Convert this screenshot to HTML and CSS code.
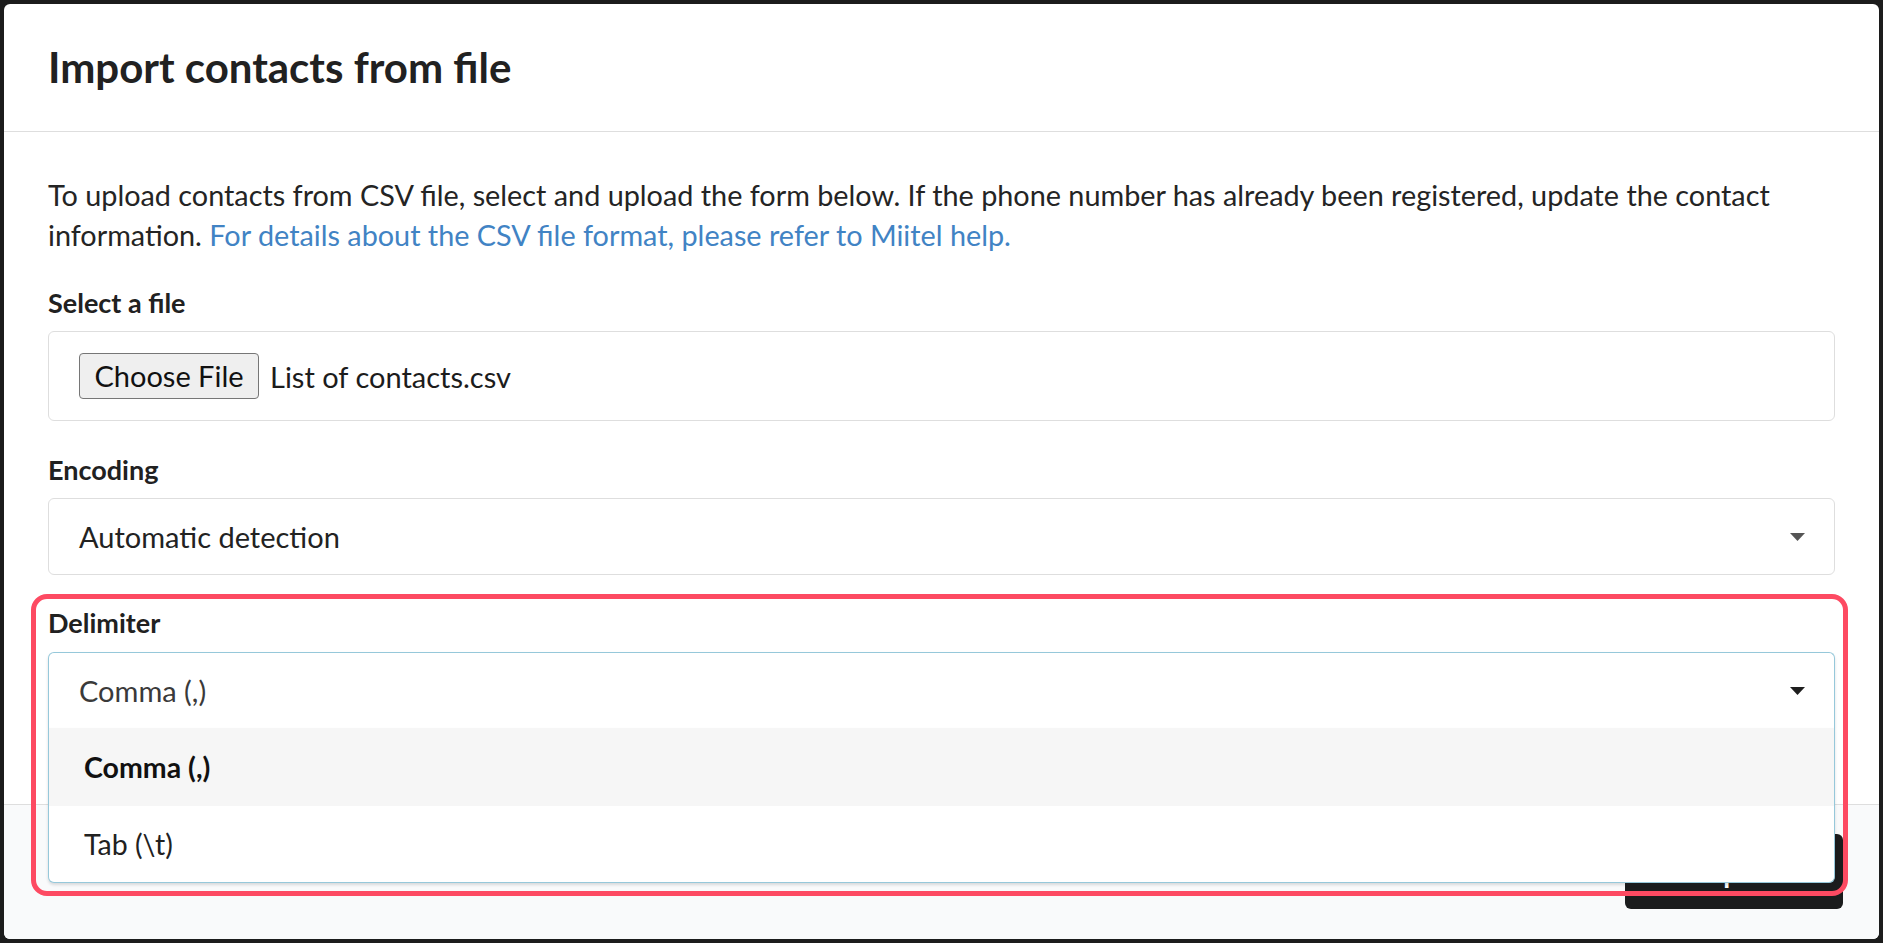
FILE: index.html
```html
<!DOCTYPE html>
<html lang="en">
<head>
<meta charset="utf-8">
<title>Import contacts from file</title>
<link rel="stylesheet" href="styles.css">
</head>
<body>
<div class="modal">
  <div class="modal-header">
    <h1 class="title">Import contacts from file</h1>
  </div>
  <div class="modal-content">
    <p class="intro">To upload contacts from CSV file, select and upload the form below. If the phone number has already been registered, update the contact information. <a class="link" href="#">For details about the CSV file format, please refer to Miitel help.</a></p>
    <div class="field field-file">
      <label class="field-label">Select a file</label>
      <div class="file-box">
        <span class="file-btn">Choose File</span>
        <span class="file-name">List of contacts.csv</span>
      </div>
    </div>
    <div class="field field-encoding">
      <label class="field-label">Encoding</label>
      <div class="select">
        <span class="select-text">Automatic detection</span>
        <svg class="caret" width="15" height="8" viewBox="0 0 15 8"><polygon points="0,0 15,0 7.5,8"/></svg>
      </div>
    </div>
    <div class="field field-delimiter">
      <label class="field-label">Delimiter</label>
      <div class="select select-open">
        <span class="select-text select-text-active">Comma (,)</span>
        <svg class="caret caret-active" width="15" height="8" viewBox="0 0 15 8"><polygon points="0,0 15,0 7.5,8"/></svg>
        <div class="menu">
          <div class="menu-item menu-item-selected">Comma (,)</div>
          <div class="menu-item">Tab (\t)</div>
        </div>
      </div>
      <div class="annotation"></div>
    </div>
  </div>
  <div class="modal-actions">
    <button class="btn-primary">Import</button>
  </div>
</div>
</body>
</html>
```

FILE: styles.css
```css
html, body {
  margin: 0;
  padding: 0;
}
body {
  background: #1c1c1c;
  width: 1883px;
  height: 943px;
  overflow: hidden;
  font-family: Lato, "Noto Sans", sans-serif;
  color: #222;
}
.modal {
  margin: 4px;
  width: 1875px;
  height: 935px;
  background: #fff;
  border-radius: 6px;
  display: flex;
  flex-direction: column;
}
.modal-header {
  box-sizing: border-box;
  height: 128px;
  padding: 38px 44px 0;
  border-bottom: 1px solid #dedede;
}
.title {
  margin: 0;
  font-size: 42px;
  line-height: 50px;
  font-weight: 700;
  color: #212121;
}
.modal-content {
  flex: 1;
  padding: 43px 44px 0;
}
.intro {
  margin: 0 0 28px;
  font-size: 28.8px;
  line-height: 40px;
  color: #242424;
}
.link {
  color: #4183c4;
  text-decoration: none;
}
.field {
  position: relative;
}
.field-file {
  margin-bottom: 29px;
}
.field-encoding {
  margin-bottom: 28px;
}
.field-label {
  display: block;
  font-size: 27px;
  line-height: 40px;
  font-weight: 700;
  color: #212121;
  margin-bottom: 8px;
}
.field-delimiter .field-label {
  margin-bottom: 9px;
}
.file-box {
  box-sizing: border-box;
  height: 90px;
  border: 1px solid #dedede;
  border-radius: 6px;
  padding: 0 30px;
  display: flex;
  align-items: center;
  gap: 11px;
}
.file-btn {
  box-sizing: border-box;
  width: 180px;
  height: 46px;
  border: 1.5px solid #767676;
  border-radius: 4px;
  background: #efefef;
  font-size: 29px;
  line-height: 43px;
  text-align: center;
  color: #111;
}
.file-name {
  font-size: 29px;
  color: #1c1c1c;
}
.select {
  position: relative;
  box-sizing: border-box;
  height: 77px;
  border: 1px solid #dedede;
  border-radius: 6px;
  padding: 0 29px 0 30px;
  display: flex;
  align-items: center;
  justify-content: space-between;
}
.select-text {
  font-size: 29px;
  color: #222;
}
.caret {
  fill: #555;
}
.select-open {
  height: 76px;
  border-color: #96c8da;
  border-bottom: none;
  border-radius: 6px 6px 0 0;
  box-shadow: 0 2px 3px 0 rgba(34, 36, 38, 0.15);
  z-index: 5;
}
.select-text-active {
  color: #3a3a3a;
}
.caret-active {
  fill: #1e1e1e;
}
.menu {
  position: absolute;
  top: 100%;
  left: -1px;
  right: -1px;
  background: #fff;
  border: 1px solid #96c8da;
  border-top: none;
  border-radius: 0 0 6px 6px;
  box-shadow: 0 2px 3px 0 rgba(34, 36, 38, 0.15);
  overflow: hidden;
}
.menu-item {
  box-sizing: border-box;
  height: 78px;
  padding-left: 35px;
  display: flex;
  align-items: center;
  font-size: 28.5px;
  color: #212121;
}
.menu-item + .menu-item {
  height: 76px;
}
.menu-item-selected {
  background: #f6f6f6;
  font-weight: 700;
  color: #111;
}
.annotation {
  position: absolute;
  top: -9px;
  left: -17px;
  right: -13px;
  height: 302px;
  box-sizing: border-box;
  border: 5px solid #fd4a62;
  border-radius: 16px;
  z-index: 10;
  pointer-events: none;
}
.modal-actions {
  box-sizing: border-box;
  height: 135px;
  border-top: 1px solid #dedede;
  background: #f9fafb;
  border-radius: 0 0 6px 6px;
  padding: 29px 36px 0;
  display: flex;
  justify-content: flex-end;
  align-items: flex-start;
}
.btn-primary {
  width: 218px;
  height: 75px;
  border: none;
  border-radius: 6px;
  background: #1b1c1d;
  color: #fff;
  font-family: Lato, "Noto Sans", sans-serif;
  font-size: 28px;
  font-weight: 700;
}
```
